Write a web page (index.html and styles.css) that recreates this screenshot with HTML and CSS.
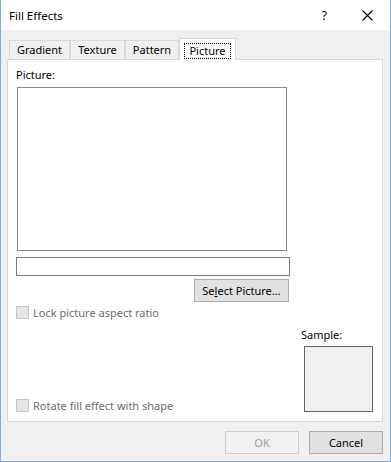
FILE: index.html
```html
<!DOCTYPE html>
<html lang="en">
<head>
    <meta charset="UTF-8">
    <title>Fill Effects</title>
    <link rel="stylesheet" href="styles.css">
</head>
<body>
    <div class="window">
        <div class="titlebar">
            <span class="title">Fill Effects</span>
            <span class="help">?</span>
            <svg class="close" width="11" height="11" viewBox="0 0 11 11">
                <path d="M0.5 0.5 L10.5 10.5 M10.5 0.5 L0.5 10.5" stroke="#000" stroke-width="1.1" fill="none"/>
            </svg>
        </div>

        <div class="dialog-body">
            <div class="tabs">
                <div class="tab tab-gradient">Gradient</div>
                <div class="tab tab-texture">Texture</div>
                <div class="tab tab-pattern">Pattern</div>
                <div class="tab tab-picture active"><span class="focus">Picture</span></div>
            </div>

            <div class="panel">
                <div class="left-col">
                    <div class="field-label">Picture:</div>
                    <div class="picture-box"></div>
                    <div class="text-field"></div>
                    <button class="btn select-btn">Se<u>l</u>ect Picture...</button>
                    <div class="check lock-row"><span class="checkbox"></span>Lock picture aspect ratio</div>
                    <div class="check rotate-row"><span class="checkbox"></span>Rotate fill effect with shape</div>
                </div>
                <div class="right-col">
                    <div class="sample-label">Sample:</div>
                    <div class="sample-box"></div>
                </div>
            </div>

            <div class="footer">
                <button class="btn footer-btn" disabled>OK</button>
                <button class="btn footer-btn">Cancel</button>
            </div>
        </div>
    </div>
</body>
</html>
```

FILE: styles.css
```css
body {
    margin: 0;
    font-family: "Noto Sans", "DejaVu Sans", sans-serif;
    font-size: 11px;
    color: #000;
    background: #fff;
}

.window {
    width: 391px;
    height: 462px;
    box-sizing: border-box;
    border: 1px solid #85a9d9;
    border-top: none;
    display: flex;
    flex-direction: column;
}

/* title bar */
.titlebar {
    height: 30px;
    flex-shrink: 0;
    background: #fff;
    display: flex;
    align-items: center;
    padding-left: 8px;
}

.title {
    font-size: 11.5px;
}

.help {
    margin-left: auto;
    margin-right: 35px;
    font-size: 12px;
}

.close {
    margin-right: 17px;
}

/* body */
.dialog-body {
    flex: 1;
    background: #f0f0f0;
    padding: 8px 7px 0 6px;
    display: flex;
    flex-direction: column;
}

.tabs {
    display: flex;
    align-items: flex-end;
    height: 21px;
    margin-left: 2px;
    position: relative;
    z-index: 1;
}

.tab {
    box-sizing: border-box;
    height: 19px;
    border: 1px solid #d9d9d9;
    border-bottom: none;
    background: #f0f0f0;
    text-align: center;
    line-height: 18px;
}

.tab-gradient { width: 61px; }
.tab-texture { width: 55px; }
.tab-pattern { width: 54px; }

.tab-picture {
    width: 57px;
    height: 22px;
    margin-bottom: -1px;
    background: #fff;
    padding-top: 3px;
}

.focus {
    display: inline-block;
    box-sizing: border-box;
    width: 47px;
    height: 16px;
    line-height: 14px;
    border: 1px dotted #000;
}

.panel {
    flex: 1;
    background: #fff;
    border: 1px solid #d9d9d9;
    padding: 0 8px 9px 8px;
    display: flex;
}

.left-col {
    width: 274px;
    display: flex;
    flex-direction: column;
}

.field-label {
    margin-top: 7px;
    line-height: 16px;
}

.picture-box {
    margin: 4px 0 0 1px;
    width: 270px;
    height: 164px;
    box-sizing: border-box;
    border: 1px solid #828790;
}

.text-field {
    margin-top: 6px;
    height: 19px;
    box-sizing: border-box;
    border: 1px solid #7a7a7a;
    background: #fff;
}

.btn {
    font-family: inherit;
    font-size: 11px;
    color: #000;
    background: #e1e1e1;
    border: 1px solid #adadad;
    height: 23px;
    box-sizing: border-box;
    padding: 0;
}

.select-btn {
    margin: 3px 1px 0 auto;
    width: 95px;
}

.check {
    display: flex;
    align-items: center;
    height: 13px;
    color: #6d6d6d;
}

.checkbox {
    width: 13px;
    height: 13px;
    box-sizing: border-box;
    border: 1px solid #c6c6c6;
    background: #e6e6e6;
    margin-right: 4px;
    flex-shrink: 0;
}

.lock-row {
    margin-top: 4px;
}

.rotate-row {
    margin-top: auto;
}

.right-col {
    margin-left: 11px;
    display: flex;
    flex-direction: column;
    justify-content: flex-end;
}

.sample-label {
    line-height: 16px;
    margin-bottom: 3px;
}

.sample-box {
    margin-left: 3px;
    width: 69px;
    height: 66px;
    box-sizing: border-box;
    border: 1px solid #646464;
    background: #f0f0f0;
}

.footer {
    display: flex;
    justify-content: flex-end;
    gap: 10px;
    padding: 9px 0 7px 0;
}

.footer-btn {
    width: 74px;
}

.footer-btn:disabled {
    background: #f0f0f0;
    border-color: #cccccc;
    color: #a0a0a0;
}
```
